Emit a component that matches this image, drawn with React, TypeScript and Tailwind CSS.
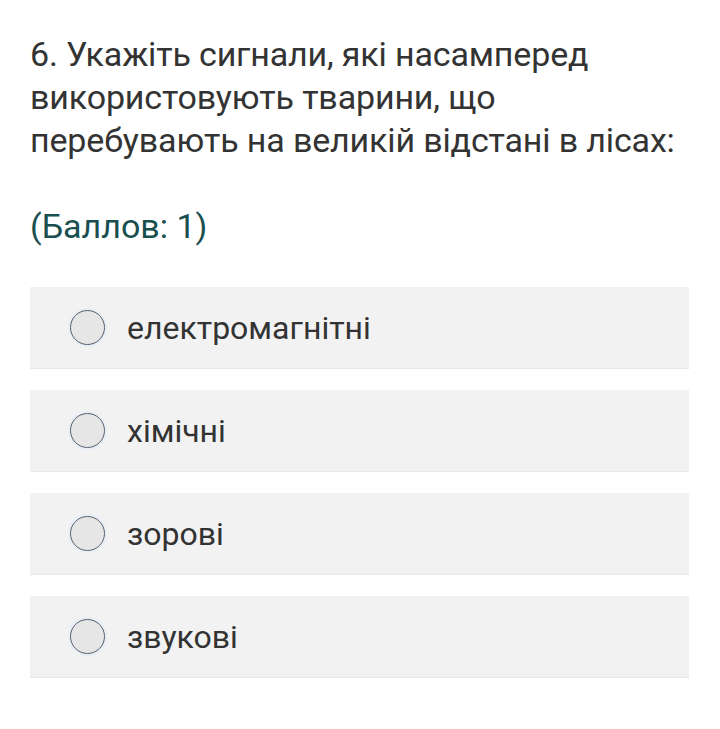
import React from "react";

const options = ["електромагнітні", "хімічні", "зорові", "звукові"];

export default function App() {
  return (
    <div
      className="w-[720px] h-[729px] bg-white px-[30px] pt-[33px]"
      style={{ fontFamily: "Roboto, 'Noto Sans', sans-serif" }}
    >
      {/* question */}
      <p className="text-[34px] leading-[43px] text-[#333333] tracking-[-0.15px]">
        6. Укажіть сигнали, які насамперед використовують тварини, що
        перебувають на великій відстані в лісах:
      </p>

      <p className="mt-[43px] text-[34px] leading-[43px] text-[#1a4f4f]">
        (Баллов: 1)
      </p>

      {/* answers */}
      <div className="mt-[39px] flex flex-col gap-[21px] w-[659px]">
        {options.map((opt, i) => (
          <label
            key={i}
            className="h-[82px] bg-[#f2f2f2] border-b border-[#e9e9e9] flex items-center pl-[40px]"
          >
            <span className="w-[35px] h-[35px] rounded-full bg-[#e6e6e6] border-[1.5px] border-[#5a6170] shadow-[0_0_0_2px_#e8eef6] shrink-0" />
            <span className="ml-[22px] text-[32px] text-[#333333]">{opt}</span>
          </label>
        ))}
      </div>
    </div>
  );
}
